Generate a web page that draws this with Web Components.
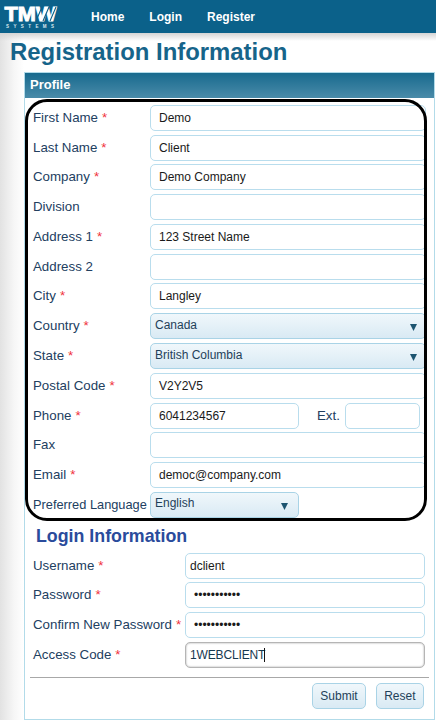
<!DOCTYPE html>
<html lang="en"><head><meta charset="utf-8"><title>Registration Information</title>
<style>
html,body{margin:0;height:720px;overflow:hidden}
body{font-family:"Liberation Sans",Arial,sans-serif;background:linear-gradient(to right,#e2e2e2 0,#f6f6f6 14px,#fff 24px)}
</style></head><body>
<tmw-nav></tmw-nav>
<page-title>Registration Information</page-title>
<form-panel heading="Profile">
  <div slot="framed">
    <form-row label="First Name" req><text-field>Demo</text-field></form-row>
    <form-row label="Last Name" req><text-field>Client</text-field></form-row>
    <form-row label="Company" req><text-field>Demo Company</text-field></form-row>
    <form-row label="Division"><text-field></text-field></form-row>
    <form-row label="Address 1" req><text-field>123 Street Name</text-field></form-row>
    <form-row label="Address 2"><text-field></text-field></form-row>
    <form-row label="City" req><text-field>Langley</text-field></form-row>
    <form-row label="Country" req><select-field style="--arrow-pad:8.5px">Canada</select-field></form-row>
    <form-row label="State" req><select-field style="--arrow-pad:8.5px">British Columbia</select-field></form-row>
    <form-row label="Postal Code" req><text-field>V2Y2V5</text-field></form-row>
    <form-row label="Phone" req>
      <text-field style="flex:0 0 149px">6041234567</text-field>
      <ext-label>Ext.</ext-label>
      <text-field style="flex:0 0 75px"></text-field>
    </form-row>
    <form-row label="Fax"><text-field></text-field></form-row>
    <form-row label="Email" req><text-field>democ@company.com</text-field></form-row>
    <form-row tight label="Preferred Language"><select-field style="flex:0 0 149px">English</select-field></form-row>
  </div>
  <section-title>Login Information</section-title>
  <form-row wide label="Username" req><text-field style="padding-left:4px">dclient</text-field></form-row>
  <form-row wide label="Password" req><text-field>•••••••••••</text-field></form-row>
  <form-row wide label="Confirm New Password" req><text-field>•••••••••••</text-field></form-row>
  <form-row wide label="Access Code" req><text-field focused>1WEBCLIENT</text-field></form-row>
  <form-actions><panel-button>Submit</panel-button><panel-button>Reset</panel-button></form-actions>
</form-panel>
<script>
function def(name,css,html,setup){
  customElements.define(name,class extends HTMLElement{
    connectedCallback(){
      if(this.shadowRoot)return;
      const r=this.attachShadow({mode:'open'});
      r.innerHTML='<style>'+css+'</style>'+html;
      if(setup)setup(this,r);
    }
  });
}
def('tmw-nav',`
:host{display:flex;align-items:center;height:33px;background:#0b618a;color:#fff;font:bold 12px "Liberation Sans",Arial,sans-serif}
svg{flex:none;margin:0 34px 0 4px;display:block;overflow:visible}
nav{display:flex;gap:25px}
span{display:block}`,
`<svg width="53" height="24" viewBox="0 0 53 24" aria-label="TMW Systems">
<text x="0.5" y="16" font-family="Liberation Sans" font-weight="bold" font-size="20" fill="#fff" textLength="52" lengthAdjust="spacingAndGlyphs" stroke="#fff" stroke-width=".9">TMW</text>
<path d="M32 16 38 2M39 16 45 2M46 16 52 2" stroke="#0b618a" stroke-width="1.1" fill="none"/>
<text x="2" y="23" font-family="Liberation Sans" font-weight="bold" font-size="4.5" fill="#dbe8ef" textLength="48">SYSTEMS</text>
</svg><nav><span>Home</span><span>Login</span><span>Register</span></nav>`);
def('page-title',`
:host{display:block;padding:5px 0 0 10px;height:33px;box-sizing:border-box;background:linear-gradient(#d4d4d4,rgba(255,255,255,0) 8px);color:#16648a;font:bold 23.9px/27px "Liberation Sans",Arial,sans-serif}`,`<slot></slot>`);
def('form-panel',`
:host{display:block;position:relative;margin:6px 0 0 24px;width:411px;height:648px;box-sizing:border-box;border:1px solid #b2dbe9;background:#fff}
header{height:25px;box-sizing:border-box;padding:4px 0 0 5px;background:linear-gradient(#186a8e,#4a8ba9);color:#fff;font:bold 13px/16px "Liberation Sans",Arial,sans-serif}
.framed{padding:5px 0 0 8px}
.login{padding:0 0 0 8px}
.frame{position:absolute;left:0;top:26px;width:402px;height:422px;box-sizing:border-box;border:3.5px solid #000;border-radius:22px;pointer-events:none}`,
`<header></header><div class="framed"><slot name="framed"></slot></div><div class="login"><slot></slot></div><div class="frame"></div>`,
(h,r)=>{r.querySelector('header').textContent=h.getAttribute('heading')});
def('form-row',`
:host{display:flex;align-items:center;height:29.77px;width:393px;font:13.3px "Liberation Sans",Arial,sans-serif;color:#22405f;white-space:nowrap}
:host([wide]){width:392px}
label{flex:0 0 117px;display:block;padding-bottom:1px}
:host([tight]) label{font-size:12.8px}
:host([wide]) label{flex-basis:152px}
i{font-style:normal;color:#f0323c;margin-left:4px}
.f{flex:1;display:flex;align-items:center;min-width:0}`,
`<label></label><div class="f"><slot></slot></div>`,
(h,r)=>{const l=r.querySelector('label');l.textContent=h.getAttribute('label');
 if(h.hasAttribute('req')){const s=document.createElement('i');s.textContent='*';l.append(s)}});
def('text-field',`
:host{display:block;flex:1;min-width:0;height:26px;box-sizing:border-box;border:1px solid #b9dded;border-radius:5px;background:#fff;padding:0 0 0 8px;font:12px/24px "Liberation Sans",Arial,sans-serif;color:#1a1a1a;overflow:hidden;white-space:nowrap}
:host([focused]){border-color:#b5b5b5;box-shadow:inset 0 0 2px #999;padding-left:4px;color:#16384f;letter-spacing:-.15px}
b{display:inline-block;width:1px;height:14px;background:#111;vertical-align:-3px;margin-left:-1px}`,
`<slot></slot>`,
(h,r)=>{if(h.hasAttribute('focused'))r.append(document.createElement('b'))});
def('select-field',`
:host{display:flex;flex:1;min-width:0;height:26px;box-sizing:border-box;border:1px solid #a9d3e6;border-radius:5px;background:linear-gradient(#f0f7fb,#d9eaf4);padding:0 var(--arrow-pad,10px) 3px 4px;align-items:center;justify-content:space-between;font:12px "Liberation Sans",Arial,sans-serif;color:#1f4159;white-space:nowrap}
svg{flex:none;margin-top:6px}`,
`<slot></slot><svg width="7" height="7" viewBox="0 0 7 7"><path d="M0 0H7L3.5 7Z" fill="#1c5470"/></svg>`);
def('ext-label',`
:host{display:block;flex:0 0 46px;box-sizing:border-box;padding-left:18px;font:13.3px "Liberation Sans",Arial,sans-serif;color:#22405f}`,`<slot></slot>`);
def('section-title',`
:host{display:block;padding:6px 0 0 3px;height:31px;box-sizing:border-box;color:#2a4b9c;font:bold 17.8px/20px "Liberation Sans",Arial,sans-serif}`,`<slot></slot>`);
def('form-actions',`
:host{display:flex;justify-content:flex-end;gap:9.5px;margin:7px 0 0 -3px;width:399px;padding:5px 5px 0 0;box-sizing:border-box;border-top:1px solid #a8a8a8}`,`<slot></slot>`);
def('panel-button',`
:host{display:block;height:26px;box-sizing:border-box;border:1px solid #a9d3e6;border-radius:5px;background:linear-gradient(#f0f7fb,#d9eaf4);padding:0 7.5px;font:12px/24px "Liberation Sans",Arial,sans-serif;color:#1f4159}`,`<slot></slot>`);
</script>
</body></html>
